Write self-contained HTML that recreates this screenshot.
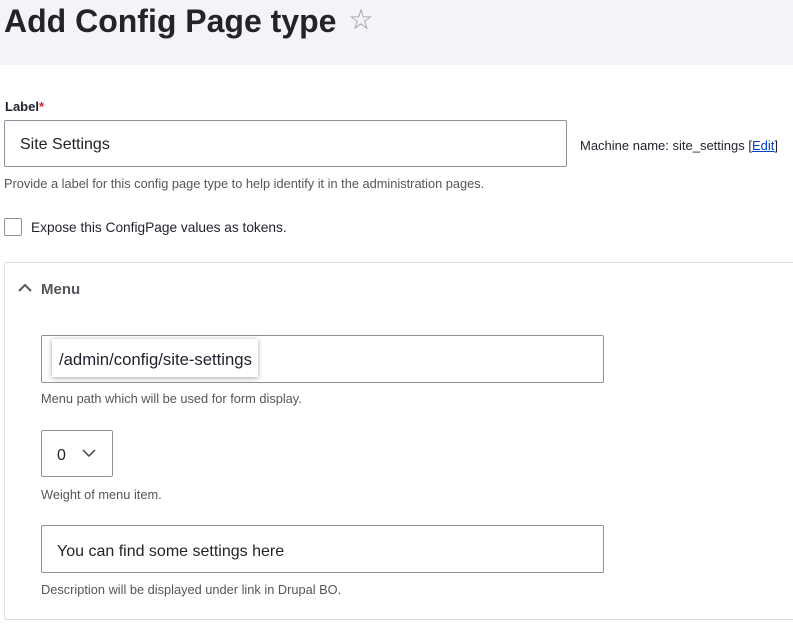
<!DOCTYPE html>
<html><head><meta charset="utf-8"><style>
*{box-sizing:border-box;margin:0;padding:0}
body{width:793px;height:626px;overflow:hidden;background:#fff;font-family:"Liberation Sans",sans-serif;color:#222330;position:relative}
.a{position:absolute;white-space:nowrap}
.hdr{position:absolute;left:0;top:0;width:793px;height:65px;background:#f3f4f9}
h1{position:absolute;left:4px;top:3px;font-size:32px;font-weight:bold;letter-spacing:0px;color:#232429;white-space:nowrap}
.inp{position:absolute;border:1px solid #8e929c;border-radius:2px;background:#fff;font-size:16px;color:#232429}
.desc{font-size:12.8px;color:#55565b}
</style></head><body>
<div class="hdr"></div>
<h1>Add Config Page type <span style="font-weight:normal;color:#999;font-size:28px;position:relative;top:-3px;margin-left:3px">☆</span></h1>
<div class="a" style="left:5px;top:99px;font-size:13px;font-weight:bold">Label<span style="color:#d72222">*</span></div>
<div class="inp" style="left:4px;top:120px;width:563px;height:47px"><span class="a" style="left:15px;top:15px">Site Settings</span></div>
<div class="a" style="left:580px;top:138px;font-size:13px">Machine name: site_settings [<span style="color:#003ecc;text-decoration:underline">Edit</span>]</div>
<div class="a desc" style="left:4px;top:176px">Provide a label for this config page type to help identify it in the administration pages.</div>
<div class="a" style="left:4px;top:218px;width:18px;height:18px;border:1px solid #8e929c;border-radius:2px"></div>
<div class="a" style="left:31px;top:220px;font-size:13.7px">Expose this ConfigPage values as tokens.</div>
<div class="a" style="left:4px;top:262px;width:800px;height:358px;border:1px solid #dedfe4;border-radius:2px"></div>
<svg class="a" style="left:18px;top:283px" width="14" height="10"><path d="M1 8 L7 2 L13 8" stroke="#55565b" stroke-width="2" fill="none"/></svg>
<div class="a" style="left:41px;top:281px;font-size:15px;font-weight:bold;color:#55565b">Menu</div>
<div class="inp" style="left:41px;top:335px;width:563px;height:48px"></div>
<div class="a" style="left:52px;top:339px;width:206px;height:38px;background:#fff;box-shadow:0 1px 5px rgba(0,0,0,.35);font-size:16.7px;padding:11px 0 0 7px">/admin/config/site-settings</div>
<div class="a desc" style="left:41px;top:391px">Menu path which will be used for form display.</div>
<div class="inp" style="left:41px;top:430px;width:72px;height:47px"><span class="a" style="left:15px;top:16px">0</span>
<svg class="a" style="left:40px;top:18px" width="14" height="9"><path d="M1 1 L7 7 L13 1" stroke="#55565b" stroke-width="1.6" fill="none"/></svg></div>
<div class="a desc" style="left:41px;top:487px">Weight of menu item.</div>
<div class="inp" style="left:41px;top:525px;width:563px;height:48px"><span class="a" style="left:15px;top:17px">You can find some settings here</span></div>
<div class="a desc" style="left:41px;top:582px">Description will be displayed under link in Drupal BO.</div>
</body></html>
